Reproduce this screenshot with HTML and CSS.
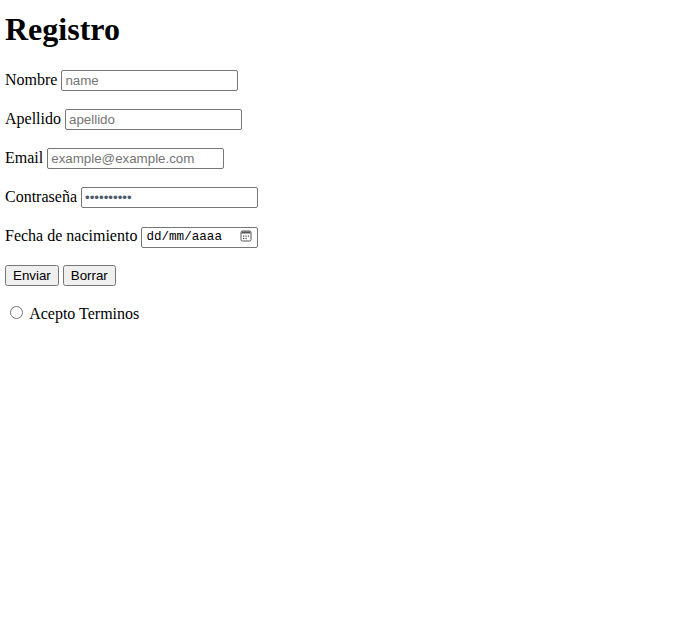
FILE: index.html
```html
<!DOCTYPE html>
<html lang="es">
<head>
<meta charset="utf-8">
<title>Registro</title>
<link rel="stylesheet" href="styles.css">
</head>
<body>
<h1 class="title">Registro</h1>
<form class="form">
  <p class="row"><label for="n">Nombre</label> <input id="n" class="field" type="text" placeholder="name"></p>
  <p class="row"><label for="a">Apellido</label> <input id="a" class="field" type="text" placeholder="apellido"></p>
  <p class="row"><label for="e">Email</label> <input id="e" class="field" type="email" placeholder="example@example.com"></p>
  <p class="row"><label for="c">Contraseña</label> <input id="c" class="field pass" type="password" value="1234567890"></p>
  <p class="row daterow"><label for="f">Fecha de nacimiento</label> <input id="f" class="field date" type="text" placeholder="dd/mm/aaaa"><svg class="cal" width="12" height="12" viewBox="0 0 12 12" aria-hidden="true"><rect x="1" y="1" width="10" height="10" rx="1.5" fill="none" stroke="#555" stroke-width="1"/><rect x="1.5" y="1.5" width="9" height="2" fill="#555"/><rect x="3" y="5.5" width="1.3" height="1.3" fill="#555"/><rect x="5.4" y="5.5" width="1.3" height="1.3" fill="#555"/><rect x="7.8" y="5.5" width="1.3" height="1.3" fill="#555"/><rect x="3" y="7.8" width="1.3" height="1.3" fill="#555"/><rect x="5.4" y="7.8" width="1.3" height="1.3" fill="#555"/></svg></p>
  <p class="row"><button class="btn" type="button">Enviar</button> <button class="btn" type="reset">Borrar</button></p>
  <p class="row"><input class="radio" type="radio" id="t"> <label for="t">Acepto Terminos</label></p>
</form>
</body>
</html>
```
FILE: styles.css
```css
body {
  margin: 5px;
  font-family: "Liberation Serif", "Times New Roman", serif;
  font-size: 16px;
  color: #000;
  background: #fff;
}
.title {
  font-size: 32px;
  font-weight: bold;
  margin: 6px 0 21px;
  line-height: 37px;
}
.form { margin: 0; }
.row {
  margin: 0 0 17px;
  height: 22px;
  line-height: 22px;
}
.daterow { position: relative; }
.field {
  font-family: "Liberation Sans", Arial, sans-serif;
  font-size: 13.33px;
  width: 177px;
  height: 21px;
  box-sizing: border-box;
  border: 1px solid #767676;
  border-radius: 2px;
  padding: 1px 3px;
}
.field::placeholder { color: #757575; }
.pass {
  color: #4a5a6a;
}
.date {
  width: 117px;
  font-family: "Liberation Mono", "DejaVu Sans Mono", monospace;
  font-size: 12.6px;
  padding-left: 4px;
  padding-right: 18px;
  vertical-align: 1px;
}
.date::placeholder { color: #000; }
.cal {
  position: absolute;
  left: 235px;
  top: 5px;
}
.btn {
  font-family: "Liberation Sans", Arial, sans-serif;
  font-size: 13.33px;
}
.radio { margin: 3px 3px 0 5px; }
```
